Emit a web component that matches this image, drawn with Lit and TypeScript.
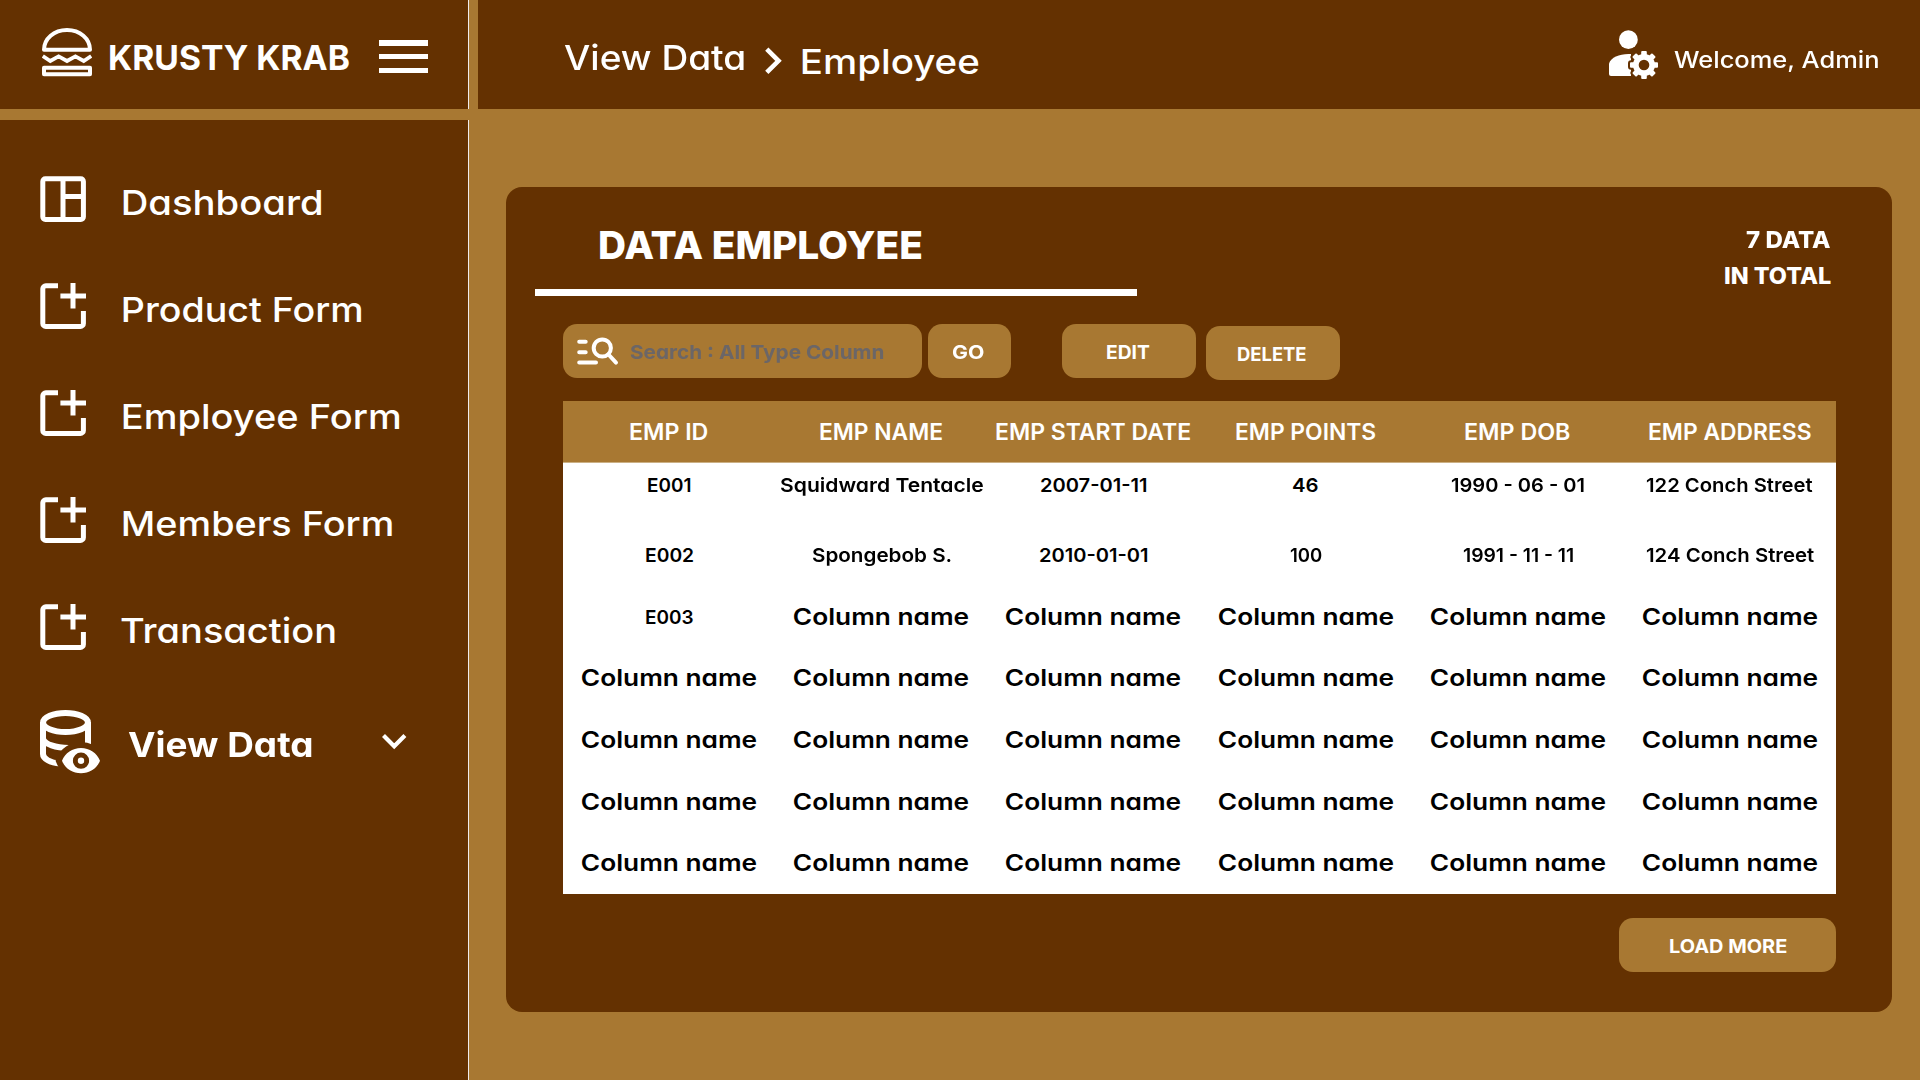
import { LitElement, html, svg, css } from "lit";
import { customElement, property } from "lit/decorators.js";

/** One line of text whose ink is stretched to a given width in pixels. */
@customElement("fit-text")
class FitText extends LitElement {
  @property() text = "";
  @property({ type: Number }) w = 0;

  static styles = css`
    :host { display: block; flex: none; white-space: nowrap; }
    .ink { display: inline-block; vertical-align: top; transform-origin: 0 50%; }
  `;

  updated() {
    const el = this.renderRoot.querySelector(".ink") as HTMLElement;
    const cs = getComputedStyle(el);
    const ctx = document.createElement("canvas").getContext("2d")!;
    ctx.font = `${cs.fontWeight} ${cs.fontSize} ${cs.fontFamily}`;
    const m = ctx.measureText(this.text);
    const left = -m.actualBoundingBoxLeft;
    const right = m.width - m.actualBoundingBoxRight;
    const scale = this.w / (el.offsetWidth - left - right);
    this.style.width = `${this.w}px`;
    el.style.transform = `translateX(${-left * scale}px) scaleX(${scale})`;
    el.style.marginRight = `${Math.min(0, this.w - el.offsetWidth)}px`;
  }

  render() {
    return html`<span class="ink">${this.text}</span>`;
  }
}

const t = (text: string, w: number, cls = "") =>
  html`<fit-text class=${cls} .text=${text} .w=${w}></fit-text>`;

const burger = svg`<svg width="50" height="49" viewBox="0 0 50 49" fill="none" stroke="#fff" stroke-width="4">
  <path d="M2 21.8C2 10.5 12 2 25 2S48 10.5 48 21.8Z" stroke-linejoin="round"/>
  <path d="M.8 28 8.3 33 16.6 28.4 25 33 33.4 28.4 41.7 33 49.2 28" stroke-width="3.8"/>
  <rect x="2" y="39.7" width="46" height="6.6" stroke-linejoin="round"/></svg>`;

const dashboard = svg`<svg width="46" height="46" viewBox="0 0 46 46" fill="none" stroke="#fff" stroke-width="5">
  <rect x="2.8" y="2.8" width="40.6" height="40.6" rx="2.6"/><path d="M23 3V43M23 20.5H43"/></svg>`;

const addForm = svg`<svg width="46" height="46" viewBox="0 0 46 46" fill="none" stroke="#fff" stroke-width="5">
  <path d="M18 2.8H5.8A3 3 0 0 0 2.8 5.8V40.4A3 3 0 0 0 5.8 43.4H40.4A3 3 0 0 0 43.4 40.4V28M20.4 13H46M33 0V25.6"/></svg>`;

const database = svg`<svg width="60" height="64" viewBox="0 0 60 64">
  <mask id="eyegap"><rect width="60" height="64" fill="#fff"/>
  <path d="M22 50.7C25 43 32.5 38 41 38S57 43 60 50.7C57 58.5 49.5 63.3 41 63.3S25 58.5 22 50.7Z" fill="#000" stroke="#000" stroke-width="12"/></mask>
  <g fill="none" stroke="#fff" stroke-width="6" mask="url(#eyegap)">
  <ellipse cx="25.5" cy="12.5" rx="22.4" ry="9.5"/>
  <path d="M3 12V44C3 48.5 10 53 20 53.4M3 29C5 34 15 38.2 30 38M48 12V36"/></g>
  <path fill="#fff" fill-rule="evenodd" d="M22 50.7C25 43 32.5 38 41 38S57 43 60 50.7C57 58.5 49.5 63.3 41 63.3S25 58.5 22 50.7ZM41 42.6A8.1 8.1 0 1 0 41 58.8 8.1 8.1 0 1 0 41 42.6Z"/>
  <circle cx="41" cy="50.7" r="3.2" fill="#fff"/></svg>`;

const gearTeeth = [0, 45, 90, 135];
const gear = (color: string, grow: number) => svg`<g fill=${color} stroke=${color} stroke-width=${grow}>
  <circle cx="35" cy="35" r="11"/>
  ${gearTeeth.map(a => svg`<rect x="32.2" y="21" width="5.6" height="28" rx="1" transform="rotate(${a} 35 35)"/>`)}</g>`;

const admin = svg`<svg width="50" height="50" viewBox="0 0 50 50">
  <mask id="geargap"><rect width="50" height="50" fill="#fff"/>${gear("#000", 4)}</mask>
  <mask id="gearhole"><rect width="50" height="50" fill="#fff"/><circle cx="35" cy="35" r="5.3" fill="#000"/></mask>
  <circle cx="19.4" cy="9.7" r="9.4" fill="#fff"/>
  <path fill="#fff" mask="url(#geargap)" d="M0 33.5C2 27.5 10 24 19.5 24H22V46H2A2 2 0 0 1 0 44Z"/>
  <g mask="url(#gearhole)">${gear("#fff", 0)}</g></svg>`;

const searchIcon = svg`<svg width="42" height="30" viewBox="0 0 42 30" fill="none" stroke="#fff" stroke-width="4" stroke-linecap="round">
  <path d="M2.2 4.8H8.7M2.2 15.2H8.7M2.2 25.6H19M31.5 17.5 39 25.6"/><circle cx="25.3" cy="11" r="8.6"/></svg>`;

const forms: [string, number][] = [
  ["Dashboard", 198], ["Product Form", 239], ["Employee Form", 277], ["Members Form", 269], ["Transaction", 214],
];

const heads: [string, number][] = [
  ["EMP ID", 78], ["EMP NAME", 122], ["EMP START DATE", 194], ["EMP POINTS", 139], ["EMP DOB", 105], ["EMP ADDRESS", 162],
];

type Cell = [string, number, boolean?];
const col: Cell = ["Column name", 174];
const rows: Cell[][] = [
  [["E001", 42, true], ["Squidward Tentacle", 203, true], ["2007-01-11", 105, true], ["46", 25, true], ["1990 - 06 - 01", 133, true], ["122 Conch Street", 167, true]],
  [["E002", 47, true], ["Spongebob S.", 139, true], ["2010-01-01", 107, true], ["100", 32, true], ["1991 - 11 - 11", 110, true], ["124 Conch Street", 168, true]],
  [["E003", 47, true], col, col, col, col, col],
  ...Array.from({ length: 4 }, () => Array<Cell>(6).fill(col)),
];

@customElement("app-root")
class AppRoot extends LitElement {
  static styles = css`
    :host {
      display: flex; flex-direction: column; width: 1920px; height: 1080px; overflow: hidden;
      background: #a87832; color: #fff;
      font-family: Inter, "Open Sans", sans-serif; font-feature-settings: "cv11";
      font-size: 34.5px; font-weight: 500; line-height: 36px;
    }
    svg { display: block; flex: none; }
    .top { display: flex; gap: 9px; height: 109px; margin-bottom: 11px; flex: none; }
    .brand, .bar, .side { background: #643101; box-sizing: border-box; }
    .brand { display: flex; align-items: flex-start; width: 469px; padding: 28px 0 0 42px; border-right: 1px solid #f0ecee; }
    .name { margin: 12px 0 0 18px; font-weight: 700; }
    .menu { display: flex; flex-direction: column; justify-content: space-between; width: 49px; height: 33px; margin: 12px 0 0 30px; }
    .line { height: 5.5px; background: #fff; }
    .bar { display: flex; align-items: flex-start; flex: 1; padding: 0 41px 0 86px; }
    .crumb { margin-top: 40px; }
    .arrow { margin: 47px 20px 0 20px; }
    .crumb.last { margin-top: 44px; }
    .user { display: flex; margin: 30px 0 0 auto; gap: 15px; }
    .welcome { margin-top: 12px; font-size: 23px; font-weight: 450; }
    .body { display: flex; flex: 1; min-height: 0; }
    .side { width: 469px; padding: 56px 0 0 40px; border-right: 1px solid #f0ecee; flex: none; }
    .item { display: flex; gap: 37px; height: 107px; }
    .item:nth-child(5) { gap: 35px; }
    .item .label { margin-top: 8.5px; }
    .item.active { gap: 28px; margin-top: -1px; font-weight: 650; }
    .active .label { margin-top: 17px; }
    .down { margin: 23px 0 0 43px; }
    .card {
      display: flex; flex-direction: column; box-sizing: border-box; width: 1386px; height: 825px;
      margin: 67px 0 0 37px; padding: 0 56px 0 57px; border-radius: 16px; background: #643101;
    }
    .head { display: flex; justify-content: space-between; height: 109px; flex: none; }
    .titlebox { box-sizing: border-box; width: 602px; margin-left: -28px; padding: 40px 0 0 65px; border-bottom: 7px solid #fff; height: 109px; }
    .title { font-size: 38.4px; font-weight: 800; line-height: 36px; }
    .total { display: flex; flex-direction: column; align-items: flex-end; padding: 35px 5px 0 0; font-size: 23px; font-weight: 800; line-height: 36px; }
    .tools { display: flex; margin-top: 28px; height: 54px; font-size: 19.3px; font-weight: 750; flex: none; }
    .btn { display: flex; align-items: center; justify-content: center; box-sizing: border-box; height: 54px; padding-top: 2px; border-radius: 14px; background: #a87832; line-height: 52px; }
    .search { justify-content: flex-start; width: 359px; padding-left: 14px; gap: 11px; color: #6b6667; }
    .go { width: 83px; margin-left: 6px; padding-right: 4px; }
    .edit { width: 134px; margin-left: 51px; padding-right: 2px; }
    .delete { width: 134px; margin: 2px 0 0 10px; padding-right: 3px; }
    .table { margin-top: 23px; height: 493px; background: #fff; color: #000; flex: none; font-weight: 600; font-size: 23px; }
    .row { display: grid; grid-template-columns: repeat(6, 1fr); justify-items: center; align-items: center; height: 61.57px; box-sizing: border-box; }
    .row.header { height: 62px; background: #a87832; color: #fff; border-bottom: 1px solid #cbb084; }
    .row.first { padding-bottom: 17px; }
    .small { font-size: 19.3px; }
    .more { width: 217px; margin: 24px 0 0 auto; font-size: 19.3px; font-weight: 750; }
  `;

  render() {
    return html`
      <div class="top">
        <div class="brand">
          ${burger}${t("KRUSTY KRAB", 239, "name")}
          <div class="menu"><div class="line"></div><div class="line"></div><div class="line"></div></div>
        </div>
        <div class="bar">
          ${t("View Data", 181, "crumb")}
          <svg class="arrow" width="17" height="28" viewBox="0 0 17 28" fill="none" stroke="#fff" stroke-width="4.6"><path d="M1.8 2.2 13.5 13.8 1.8 25.4"/></svg>
          ${t("Employee", 176, "crumb last")}
          <div class="user">${admin}${t("Welcome, Admin", 205, "welcome")}</div>
        </div>
      </div>
      <div class="body">
        <div class="side">
          ${forms.map(([label, w], i) => html`<div class="item">${i ? addForm : dashboard}${t(label, w, "label")}</div>`)}
          <div class="item active">${database}${t("View Data", 183, "label")}
            <svg class="down" width="25" height="17" viewBox="0 0 25 17" fill="none" stroke="#fff" stroke-width="4.2"><path d="M1.5 2.5 12.2 13.2 22.9 2.5"/></svg>
          </div>
        </div>
        <div class="card">
          <div class="head">
            <div class="titlebox">${t("DATA EMPLOYEE", 321, "title")}</div>
            <div class="total">${t("7 DATA", 85)}${t("IN TOTAL", 106)}</div>
          </div>
          <div class="tools">
            <div class="btn search">${searchIcon}${t("Search : All Type Column", 253)}</div>
            <div class="btn go">${t("GO", 31)}</div>
            <div class="btn edit">${t("EDIT", 43)}</div>
            <div class="btn delete">${t("DELETE", 68)}</div>
          </div>
          <div class="table">
            <div class="row header">${heads.map(([h, w]) => t(h, w))}</div>
            ${rows.map((r, i) => html`<div class="row ${i ? "" : "first"}">${r.map(([c, w, s]) => t(c, w, s ? "small" : ""))}</div>`)}
          </div>
          <div class="btn more">${t("LOAD MORE", 116)}</div>
        </div>
      </div>
    `;
  }
}
